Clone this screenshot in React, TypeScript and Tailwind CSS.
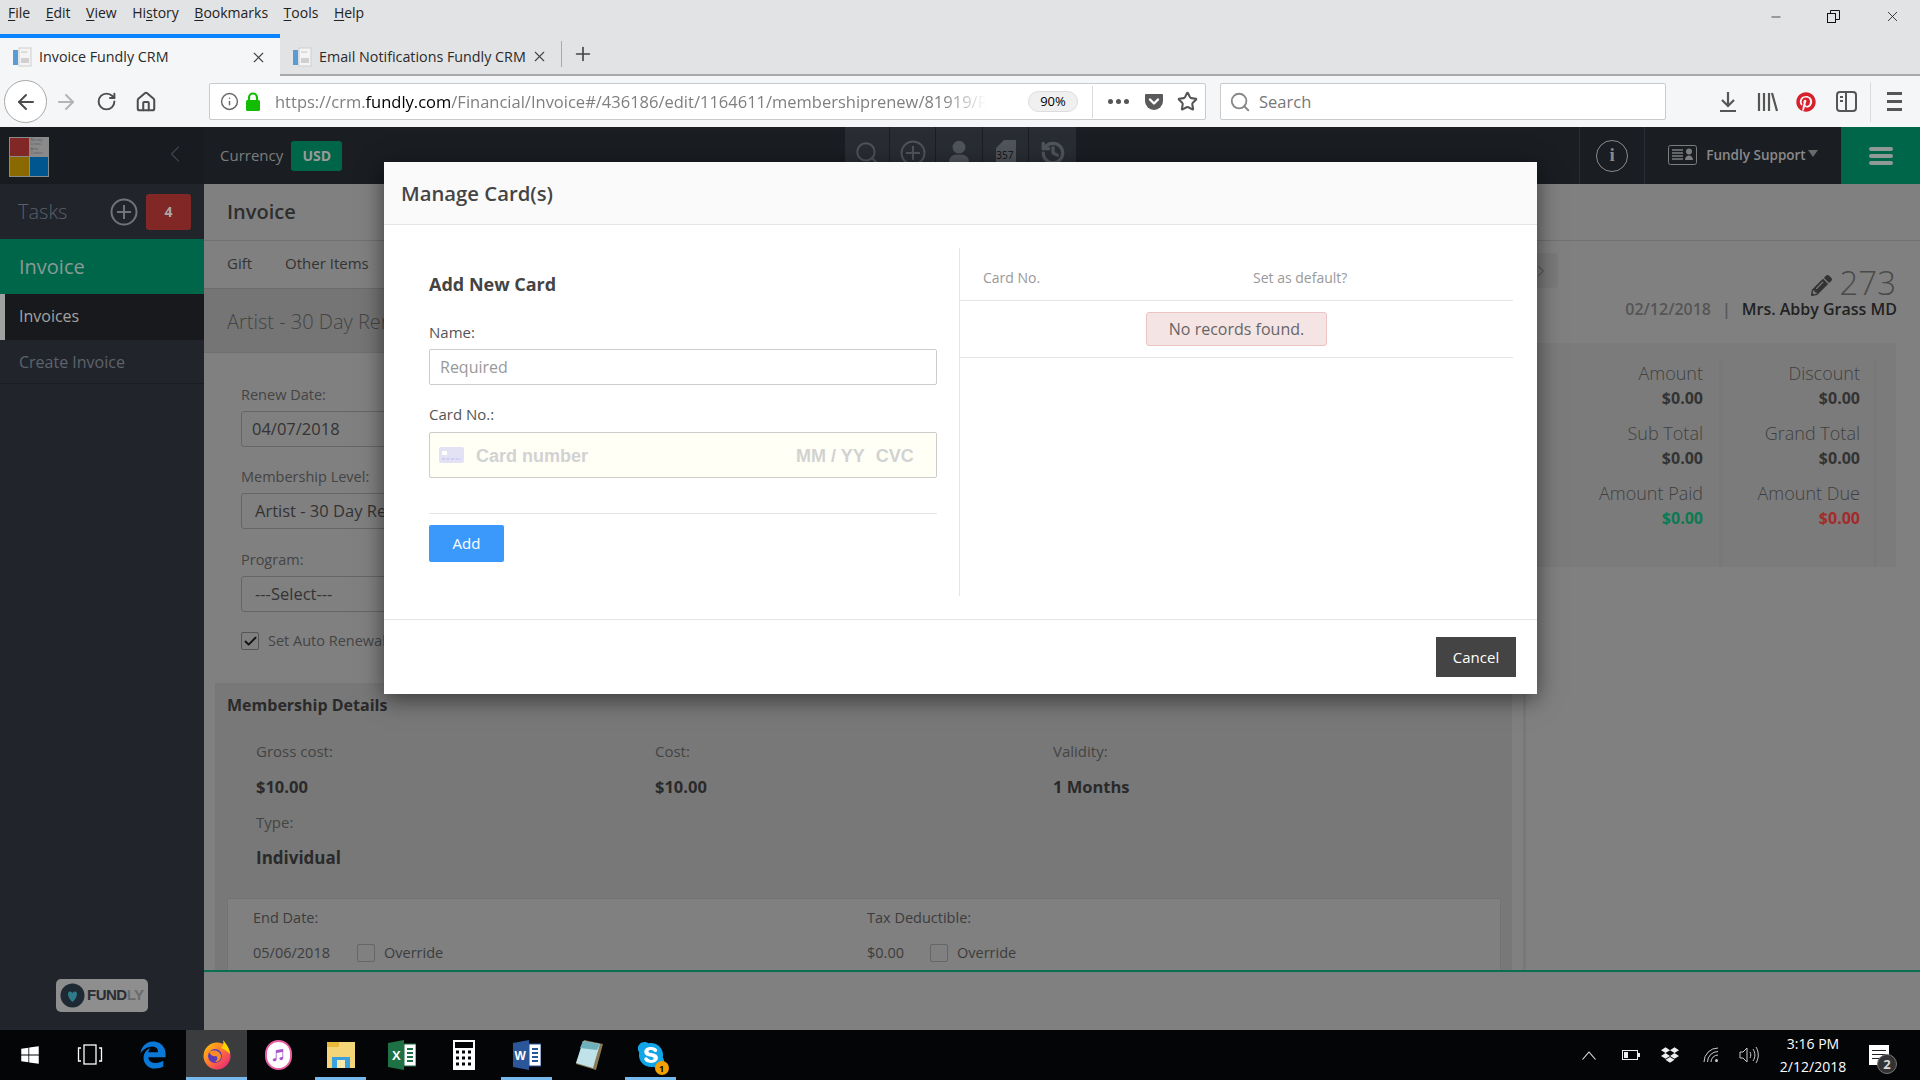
import { ArrowLeft, ArrowRight, Check, Home, Minus, RotateCw, Search, Star, X, Plus, Info, ChevronLeft, ChevronRight, User, History } from "lucide-react";
import { FaDropbox, FaEdgeLegacy, FaItunesNote, FaPencilAlt, FaPinterest, FaSkype, FaWindows } from "react-icons/fa";

const segoe = "font-['Open_Sans',sans-serif]";

function Favicon() {
  return (
    <svg width="20" height="20" viewBox="0 0 20 20" className="shrink-0">
      <rect x="7" y="1" width="12" height="18" fill="#f4f4f4" stroke="#cfcfcf" />
      <rect x="1" y="3" width="5" height="15" fill="#5b9bd5" />
      <rect x="9" y="11" width="8" height="5" fill="#d0d0d0" />
      <rect x="9" y="4" width="6" height="2" fill="#dcdcdc" />
    </svg>
  );
}

function Menu({ first, rest }: { first: string; rest: string }) {
  return (
    <span>
      <span className="underline underline-offset-2">{first}</span>
      {rest}
    </span>
  );
}

function MenuBar() {
  return (
    <div className="flex h-[34px] items-center justify-between bg-[#e2e3e5] pb-[9px] pl-2 pr-[19px] text-[14px] text-[#222]">
      <div className="flex gap-[15.5px]">
        <Menu first="F" rest="ile" />
        <Menu first="E" rest="dit" />
        <Menu first="V" rest="iew" />
        <span>Hi<span className="underline underline-offset-2">s</span>tory</span>
        <Menu first="B" rest="ookmarks" />
        <Menu first="T" rest="ools" />
        <Menu first="H" rest="elp" />
      </div>
      <div className="flex items-center gap-[44px] pt-[8px] text-[#111]">
        <Minus size={14} strokeWidth={1.2} />
        <svg width="13" height="13" viewBox="0 0 13 13" fill="none" stroke="#111">
          <rect x="0.5" y="3.5" width="8" height="9" />
          <path d="M3.5 3.5v-3h9v9h-4" />
        </svg>
        <X size={17} strokeWidth={1.1} />
      </div>
    </div>
  );
}

function TabBar() {
  return (
    <div className="flex h-[42px] items-stretch bg-[#e2e3e5] text-[14.3px] text-[#2a2a2a]">
      <div className="flex w-[280px] items-center border-t-[4px] border-[#0a84ff] bg-[#f5f6f7] pl-3 pr-[13px]">
        <Favicon />
        <span className="ml-[7px] flex-1">Invoice Fundly CRM</span>
        <X size={17} strokeWidth={1.6} className="text-[#444]" />
      </div>
      <div className="flex flex-1 items-center border-b-2 border-[#a8a9ab]">
        <div className="flex w-[282px] items-center border-r border-[#a8a9ab] pl-3 pr-[13px] pt-[5px]">
          <Favicon />
          <span className="ml-[7px] flex-1 whitespace-nowrap">Email Notifications Fundly CRM</span>
          <X size={17} strokeWidth={1.6} className="text-[#444]" />
        </div>
        <Plus size={22} strokeWidth={1.8} className="ml-[10px] text-[#444]" />
      </div>
    </div>
  );
}

function PocketIcon() {
  return (
    <svg width="20" height="20" viewBox="0 0 20 20">
      <path d="M2 2h16a1 1 0 0 1 1 1v6a9 9 0 0 1-18 0V3a1 1 0 0 1 1-1z" fill="#5a5a5c" />
      <path d="M6 7.5l4 4 4-4" fill="none" stroke="#fff" strokeWidth="2.4" strokeLinecap="round" strokeLinejoin="round" />
    </svg>
  );
}

function NavBar() {
  return (
    <div className="flex h-[51px] items-center bg-[#f5f6f7] pl-[4px] text-[#4d4d4f]">
      <div className="flex h-[43px] w-[43px] items-center justify-center rounded-full border border-[#a6a7a9] bg-white">
        <ArrowLeft size={24} strokeWidth={2} />
      </div>
      <ArrowRight size={24} strokeWidth={2} className="ml-[7px] text-[#b4b4b6]" />
      <RotateCw size={21} strokeWidth={2.2} className="ml-[18px]" />
      <Home size={22} strokeWidth={2.2} className="ml-[18px]" />

      <div className="ml-[52px] flex h-[37px] w-[997px] items-center rounded-[2px] border border-[#c9cacb] bg-white">
        <Info size={19} strokeWidth={1.8} className="ml-[10px] text-[#666]" />
        <svg width="16" height="20" viewBox="0 0 16 20" className="ml-[6px]">
          <rect x="1" y="8" width="14" height="11" rx="1.5" fill="#12bc00" />
          <path d="M4 9V5.5a4 4 0 0 1 8 0V9" fill="none" stroke="#12bc00" strokeWidth="2.2" />
        </svg>
        <div className="ml-[14px] w-[711px] overflow-hidden whitespace-nowrap pt-[1px] text-[16.5px] text-[#7f7f7f] [mask-image:linear-gradient(to_right,black_94%,transparent)]">
          https://crm.<span className="text-black">fundly.com</span>/Financial/Invoice#/436186/edit/1164611/membershiprenew/81919/Renew
        </div>
        <div className="ml-[42px] flex h-[21px] w-[50px] items-center justify-center rounded-full border border-[#dcdcdc] bg-[#f0f0f0] text-[13px] text-black">
          90%
        </div>
        <div className="ml-[14px] h-[32px] w-px bg-[#dcdcdc]" />
        <div className="ml-[15px] flex gap-[3px]">
          <span className="h-[5px] w-[5px] rounded-full bg-[#555]" />
          <span className="h-[5px] w-[5px] rounded-full bg-[#555]" />
          <span className="h-[5px] w-[5px] rounded-full bg-[#555]" />
        </div>
        <div className="ml-[15px]"><PocketIcon /></div>
        <Star size={21} strokeWidth={2.4} className="ml-[13px] text-[#555]" />
      </div>

      <div className="ml-[14px] flex h-[37px] w-[446px] items-center rounded-[2px] border border-[#c9cacb] bg-white pt-[1px] text-[16.5px] text-[#777]">
        <Search size={22} strokeWidth={2} className="ml-[8px] text-[#888]" />
        <span className="ml-[8px]">Search</span>
      </div>

      <svg width="20" height="22" viewBox="0 0 20 22" fill="none" stroke="#555" strokeWidth="2.2" className="ml-[52px]">
        <path d="M10 1v13M4 9l6 6 6-6M2 20h16" />
      </svg>
      <svg width="21" height="20" viewBox="0 0 21 20" fill="none" stroke="#555" strokeWidth="2.2" className="ml-[19px]">
        <path d="M2 1v18M7 1v18M12 1v18M15 1l5 18" />
      </svg>
      <FaPinterest size={20} className="ml-[18px] text-[#d6212c]" />
      <svg width="21" height="21" viewBox="0 0 21 21" fill="none" stroke="#555" strokeWidth="2" className="ml-[20px]">
        <rect x="1" y="1" width="19" height="19" rx="3" />
        <path d="M10 1v19M4 6h3M4 10h3" />
      </svg>
      <div className="ml-[13px] h-[40px] w-px bg-[#dcdcdc]" />
      <div className="ml-[16px] flex flex-col gap-[5px]">
        <span className="h-[3px] w-[15px] bg-[#555]" />
        <span className="h-[3px] w-[15px] bg-[#555]" />
        <span className="h-[3px] w-[15px] bg-[#555]" />
      </div>
    </div>
  );
}

function Logo() {
  return (
    <div className="grid h-10 w-10 translate-y-[1px] grid-cols-2 grid-rows-2 gap-px bg-[#8a8a8a] p-px">
      <div className="bg-[#812725]" />
      <div className="overflow-hidden pl-px text-[4px] leading-[4.5px] text-[#555]">Monty Cristo Arts Center</div>
      <div className="bg-[#8a6a00]" />
      <div className="bg-[#00578f]" />
    </div>
  );
}

function TopBar() {
  return (
    <div className={`flex h-[57px] items-stretch bg-[#1a1d22] ${segoe}`}>
      <div className="flex w-[204px] items-center justify-between bg-[#181b20] pl-[9px] pr-[15px]">
        <Logo />
        <ChevronLeft size={28} strokeWidth={1} className="-translate-y-[2px] text-[#3f434a]" />
      </div>
      <div className="ml-4 flex items-center text-[15px] text-[#7d7d7d]">
        Currency
        <div className="ml-2 flex h-[30px] w-[51px] items-center justify-center rounded-[3px] bg-[#00664a] text-[14px] font-bold text-[#9a9a9a]">
          USD
        </div>
      </div>
      <div className="ml-[503px] flex h-[36px] text-[#50545b]">
        <div className="flex w-[45px] justify-center border-r border-[#1a1d22] bg-[#292d33] pt-[13px]"><Search size={26} strokeWidth={1.8} /></div>
        <div className="flex w-[46px] justify-center border-r border-[#1a1d22] bg-[#292d33] pt-[13px]">
          <svg width="26" height="26" viewBox="0 0 26 26" fill="none" stroke="currentColor" strokeWidth="2"><circle cx="13" cy="13" r="11.5" /><path d="M13 6v14M6 13h14" /></svg>
        </div>
        <div className="flex w-[47px] justify-center border-r border-[#1a1d22] bg-[#292d33] pt-[12px]"><User size={28} strokeWidth={3} fill="currentColor" /></div>
        <div className="relative flex w-[46px] justify-center border-r border-[#1a1d22] bg-[#292d33] pt-[13px]">
          <svg width="20" height="26" viewBox="0 0 20 26" fill="currentColor"><path d="M8 0h12v26H0V8z" /></svg>
          <span className="absolute left-[13px] top-[22px] text-[10px] leading-3 text-[#111]">357</span>
        </div>
        <div className="flex w-[47px] justify-center bg-[#292d33] pt-[13px]"><History size={26} strokeWidth={3} /></div>
      </div>
      <div className="ml-[503px] flex w-[66px] items-center justify-center border-x border-[#2a2d33]">
        <div className="flex h-8 w-8 items-center justify-center rounded-full border border-[#8a8a8a] font-['Liberation_Serif',serif] text-[19px] font-bold text-[#8a8a8a]">i</div>
      </div>
      <div className="flex flex-1 items-center pb-[1px] pl-[23px] text-[13.5px] font-semibold text-[#8a8a8a]">
        <svg width="29" height="20" viewBox="0 0 29 20" fill="none" className="shrink-0">
          <rect x="0.5" y="0.5" width="28" height="19" rx="2" stroke="#7d7d7d" />
          <path d="M4 5h11M4 8h11M4 11h11M4 14h11" stroke="#7d7d7d" strokeWidth="1.4" />
          <circle cx="21" cy="6.5" r="3" fill="#7d7d7d" />
          <path d="M17 15c0-6 8-6 8 0z" fill="#7d7d7d" />
        </svg>
        <span className="ml-[9px] whitespace-nowrap">Fundly Support</span>
        <span className="ml-[2px] h-0 w-0 -translate-y-[2px] border-x-[5px] border-t-[7px] border-x-transparent border-t-[#6a6a6a]" />
      </div>
      <div className="flex w-[79px] flex-col items-center justify-center gap-[3px] bg-[#00664a]">
        <span className="h-1 w-6 rounded-full bg-[#8f9a96]" />
        <span className="h-1 w-6 rounded-full bg-[#8f9a96]" />
        <span className="h-1 w-6 rounded-full bg-[#8f9a96]" />
      </div>
    </div>
  );
}

function Sidebar() {
  return (
    <div className={`flex w-[204px] flex-col bg-[#21252b] ${segoe}`}>
      <div className="flex h-[55px] items-center pl-[18px] text-[20px] font-light text-[#5a5f68]">
        <span className="flex-1">Tasks</span>
        <svg width="28" height="28" viewBox="0 0 28 28" fill="none" stroke="#71747a" strokeWidth="2" className="mr-[8px]">
          <circle cx="14" cy="14" r="12.5" />
          <path d="M14 7v14M7 14h14" />
        </svg>
        <div className="mr-[13px] flex h-9 w-[45px] items-center justify-center rounded-[3px] bg-[#812725] text-[14px] font-bold text-[#a8a8a8]">4</div>
      </div>
      <div className="flex h-[55px] items-center bg-[#00664a] pl-[19px] text-[20px] text-[#8a9a94]">Invoice</div>
      <div className="flex h-[46px] items-center border-l-[5px] border-[#a0a0a0] bg-[#17191d] pb-[2px] pl-[14px] text-[16px] text-[#a3a3a3]">Invoices</div>
      <div className="flex h-[44px] items-center border-b border-[#1a1d22] pl-[19px] text-[16px] text-[#5e636b]">Create Invoice</div>
      <div className="mt-auto mb-[18px] ml-[56px] flex h-[33px] w-[92px] items-center rounded-[5px] bg-[#8e8e8e] pl-[4px] font-['Liberation_Sans',sans-serif] text-[15px] font-bold tracking-[-0.5px] text-[#2a2d33]">
        <svg width="25" height="25" viewBox="0 0 25 25" className="mr-[2px] shrink-0">
          <circle cx="12.5" cy="12.5" r="12" fill="#1f2933" />
          <path d="M12.5 19C7.500 15 7 9 9.500 8.500c1.500-.3 2.500.7 3 1.500.5-.8 1.500-1.800 3-1.500C18 9 17.500 15 12.500 19z" fill="#2f7a88" />
        </svg>
        FUND<span className="text-[#6a6a6a]">LY</span>
      </div>
    </div>
  );
}

function Field({ label, value, pad }: { label: string; value: string; pad: string }) {
  return (
    <>
      <div className="text-[14.5px] leading-5 text-[#444]">{label}</div>
      <div className={`mt-[6px] flex h-[36px] w-[500px] items-center rounded-[3px] border border-[#666] text-[16.5px] text-[#333] ${pad}`}>{value}</div>
    </>
  );
}

function Stat({ label, value, color }: { label: string; value: string; color: string }) {
  return (
    <div className="mb-[12px] text-right">
      <div className="whitespace-nowrap text-[18px] font-light leading-6 text-[#3f3f3f]">{label}</div>
      <div className={`mt-[2px] text-[16px] font-bold leading-[22px] ${color}`}>{value}</div>
    </div>
  );
}

function PageBody() {
  return (
    <div className={`flex flex-1 flex-col bg-[#808080] ${segoe}`}>
      <div className="flex h-[57px] shrink-0 items-center border-b border-[#707070] pl-[23px] text-[20px] font-semibold text-[#2e2e2e]">Invoice</div>

      <div className="flex min-h-0 flex-1">
        <div className="flex w-[1319px] shrink-0 flex-col overflow-hidden">
          <div className="flex h-[48px] shrink-0 items-center gap-[33px] border-b border-[#6c6c6c] pb-[2px] pl-[23px] text-[15px] text-[#333]">
            <span>Gift</span>
            <span>Other Items</span>
          </div>
          <div className="flex h-[64px] shrink-0 items-center border-b border-[#6f6f6f] bg-[#757575] pl-[23px] pt-[2px] text-[20px] font-light text-[#444]">
            Artist - 30 Day Renewal
          </div>

          <div className="pl-[37px] pt-[32px]">
            <Field label="Renew Date:" value="04/07/2018" pad="pl-[10px]" />
            <div className="mt-[20px]">
              <Field label="Membership Level:" value="Artist - 30 Day Renewal" pad="pl-[13px]" />
            </div>
            <div className="mt-[21px]">
              <Field label="Program:" value="---Select---" pad="pl-[13px]" />
            </div>
            <div className="mt-[20px] flex items-center text-[14.5px] leading-[18px] text-[#444]">
              <span className="flex h-[18px] w-[18px] items-center justify-center rounded-[2px] border border-[#555]">
                <Check size={15} strokeWidth={3} className="text-[#111]" />
              </span>
              <span className="ml-[9px]">Set Auto Renewal</span>
            </div>
          </div>

          <div className="ml-[11px] mt-[33px] w-[1297px] shrink-0 bg-[#787878] pb-8 pt-[11px]">
            <div className="pl-[12px] text-[16px] font-bold leading-[22px] text-[#2a2a2a]">Membership Details</div>
            <div className="mt-[25px] grid grid-cols-[399px_398px_1fr] gap-y-[14px] pl-[41px]">
              <div className="text-[15px] leading-[21px] text-[#444]">Gross cost:</div>
              <div className="text-[15px] leading-[21px] text-[#444]">Cost:</div>
              <div className="text-[15px] leading-[21px] text-[#444]">Validity:</div>
              <div className="text-[16.5px] font-bold leading-[22px] text-[#2a2a2a]">$10.00</div>
              <div className="text-[16.5px] font-bold leading-[22px] text-[#2a2a2a]">$10.00</div>
              <div className="text-[16.5px] font-bold leading-[22px] text-[#2a2a2a]">1 Months</div>
              <div className="col-span-3 text-[15px] leading-5 text-[#444]">Type:</div>
              <div className="col-span-3 mt-[1px] text-[17px] font-bold leading-[22px] text-[#2a2a2a]">Individual</div>
            </div>
            <div className="ml-[12px] mt-[29px] grid w-[1274px] grid-cols-[614px_1fr] gap-y-[15px] border border-[#737373] bg-[#808080] pb-6 pl-[25px] pt-[9px] text-[14.5px] leading-5 text-[#3c3c3c]">
              <div>End Date:</div>
              <div>Tax Deductible:</div>
              <div className="flex items-center">
                05/06/2018
                <span className="ml-[27px] h-[18px] w-[18px] rounded-[2px] border border-[#666]" />
                <span className="ml-[9px]">Override</span>
              </div>
              <div className="flex items-center">
                $0.00
                <span className="ml-[26px] h-[18px] w-[18px] rounded-[2px] border border-[#666]" />
                <span className="ml-[9px]">Override</span>
              </div>
            </div>
          </div>
        </div>

        <div className="relative flex flex-1 flex-col border-l-[3px] border-[#787878] pr-[24px]">
          <div className="absolute left-0 top-[12px] flex h-[35px] w-[32px] items-center justify-end rounded-r-[4px] bg-[#7a7a7a] pr-[8px] text-[#5a5a5a]">
            <ChevronRight size={18} strokeWidth={1.5} />
          </div>
          <div className="flex items-center justify-end pt-[26px] text-[33px] font-light leading-8 text-[#4a4a4a]">
            <FaPencilAlt size={21} className="mr-[7px] translate-y-[2px] text-[#333]" />
            273
          </div>
          <div className="-mr-[1px] flex justify-end text-[16px] font-semibold leading-5">
            <span className="text-[#555]">02/12/2018</span>
            <span className="mx-[11px] text-[#555]">|</span>
            <span className="text-[#222]">Mrs. Abby Grass MD</span>
          </div>
          <div className="mt-[24px] flex h-[224px] justify-end bg-[#7b7b7b] pr-[19px] pt-[18px]">
            <div className="w-[170px] border-r-[3px] border-[#787878] pr-[16px]">
              <Stat label="Amount" value="$0.00" color="text-[#333]" />
              <Stat label="Sub Total" value="$0.00" color="text-[#333]" />
              <Stat label="Amount Paid" value="$0.00" color="text-[#0b7a52]" />
            </div>
            <div className="w-[155px] border-r-[3px] border-[#787878] pr-[14px]">
              <Stat label="Discount" value="$0.00" color="text-[#333]" />
              <Stat label="Grand Total" value="$0.00" color="text-[#333]" />
              <Stat label="Amount Due" value="$0.00" color="text-[#a52a2a]" />
            </div>
          </div>
        </div>
      </div>

      <div className="h-[60px] shrink-0 border-t-2 border-[#0a6e50] bg-[#808080]" />
    </div>
  );
}

function CardModal() {
  return (
    <div className={`absolute left-[384px] top-[35px] flex h-[532px] w-[1153px] flex-col bg-white shadow-[0_5px_22px_rgba(0,0,0,0.55)] ${segoe}`}>
      <div className="flex h-[63px] shrink-0 items-center border-b border-[#e5e5e5] bg-[#fafafa] pl-[17px] pt-[1px] text-[20.3px] font-semibold text-[#444]">
        Manage Card(s)
      </div>

      <div className="flex h-[394px] shrink-0 pb-[23px] pt-[23px]">
        <div className="w-[576px] border-r border-[#e5e5e5] pl-[45px] pr-[22px]">
          <div className="pt-[24px] text-[18px] font-bold leading-6 text-[#444]">Add New Card</div>
          <div className="mt-[26px] text-[15px] leading-5 text-[#555]">Name:</div>
          <div className="mt-[7px] flex h-[36px] items-center rounded-[2px] border border-[#ccc] pl-[10px] text-[16px] text-[#999]">Required</div>
          <div className="mt-[19px] text-[15px] leading-5 text-[#555]">Card No.:</div>
          <div className="mt-[8px] flex h-[46px] items-center rounded-[2px] border border-[#ccc] bg-[#fffff6] pl-[9px] pt-[3px] font-['Liberation_Sans',sans-serif] text-[18px] font-bold text-[#d2d2d2]">
            <svg width="25" height="22" viewBox="0 0 25 22" className="-translate-y-[2px]">
              <rect x="0" y="3" width="25" height="16" rx="2" fill="#e2e2f4" />
              <rect x="3" y="7" width="5" height="4" fill="#fff" />
              <path d="M3 15h19" stroke="#c8c8ee" strokeWidth="1.500" strokeDasharray="3 1.500" />
            </svg>
            <span className="ml-[12px] w-[320px]">Card number</span>
            <span className="whitespace-nowrap">MM / YY</span>
            <span className="ml-[11px]">CVC</span>
          </div>
          <div className="mt-[35px] border-t border-[#e5e5e5]" />
          <button className="mt-[11px] h-[37px] w-[75px] rounded-[2px] bg-[#3b99fc] text-[15px] text-white">Add</button>
        </div>

        <div className="mr-[24px] flex-1">
          <div className="grid h-[53px] grid-cols-[270px_1fr] border-b border-[#e5e5e5] pl-[23px] pt-[20px] text-[14px] leading-5 text-[#999]">
            <span>Card No.</span>
            <span>Set as default?</span>
          </div>
          <div className="flex h-[57px] items-center justify-center border-b border-[#e5e5e5]">
            <div className="flex h-[34px] w-[181px] items-center justify-center rounded-[3px] border border-[#ecc4c4] bg-[#f5e4e4] text-[16px] text-[#666]">
              No records found.
            </div>
          </div>
        </div>
      </div>

      <div className="flex flex-1 items-start justify-end border-t border-[#e5e5e5] pr-[21px] pt-[17px]">
        <button className="h-[40px] w-[80px] bg-[#444] text-[15px] text-white">Cancel</button>
      </div>
    </div>
  );
}

function AppArea() {
  return (
    <div className="relative flex h-[903px] flex-col overflow-hidden">
      <TopBar />
      <div className="flex min-h-0 flex-1">
        <Sidebar />
        <PageBody />
      </div>
      <CardModal />
    </div>
  );
}

function Firefox() {
  return (
    <svg width="28" height="30" viewBox="0 0 28 30">
      <defs>
        <linearGradient id="ff" x1="0" y1="0" x2="1" y2="1">
          <stop offset="0" stopColor="#ffcb00" />
          <stop offset="0.5" stopColor="#ff7139" />
          <stop offset="1" stopColor="#e31587" />
        </linearGradient>
      </defs>
      <circle cx="14" cy="16" r="13.500" fill="url(#ff)" />
      <path d="M20 0c4 5 7 9 7 14-3-3-6-5-9-6 2-2 3-5 2-8z" fill="#ffd400" />
      <circle cx="12" cy="16" r="7" fill="#5b3bb5" />
      <path d="M6 12c5-3 11-1 12 4 0 4-3 6-6 6 3-2 3-5 1-6-2 1-5 0-7-4z" fill="#ff8a2a" />
    </svg>
  );
}

function TaskItem({ active, running, width, children }: { active?: boolean; running?: boolean; width: string; children: React.ReactNode }) {
  return (
    <div className={`relative flex h-full items-center justify-center ${width} ${active ? "bg-[#3a3c3e]" : ""}`}>
      {children}
      {running ? <span className="absolute inset-x-0 bottom-0 h-[3px] bg-[#76b9ed]" /> : null}
    </div>
  );
}

function Taskbar() {
  return (
    <div className="flex h-[50px] items-center bg-[#030507] font-['Open_Sans',sans-serif] text-white">
      <TaskItem width="w-[60px]"><FaWindows size={20} /></TaskItem>
      <TaskItem width="w-[60px]">
        <svg width="26" height="26" viewBox="0 0 26 26" fill="none" stroke="#fff" strokeWidth="1.300">
          <rect x="7" y="3" width="12" height="19" />
          <path d="M4 6H1.500v13H4M22 6h2.500v13H22" />
        </svg>
      </TaskItem>
      <TaskItem width="w-[66px]"><FaEdgeLegacy size={28} className="text-[#0a78d7]" /></TaskItem>
      <TaskItem active running width="w-[61px]"><Firefox /></TaskItem>
      <TaskItem width="w-[62px]">
        <div className="flex h-[30px] w-[27px] items-center justify-center rounded-full border-2 border-[#e85d9e] bg-white">
          <FaItunesNote size={14} className="text-[#a855c8]" />
        </div>
      </TaskItem>
      <TaskItem running width="ml-[6px] w-[51px]">
        <svg width="28" height="30" viewBox="0 0 28 30">
          <rect x="0" y="2" width="28" height="26" fill="#f4d679" />
          <rect x="0" y="2" width="12" height="5" fill="#e8b93a" />
          <rect x="5" y="17" width="18" height="11" fill="#3aa0e0" />
          <rect x="10" y="20" width="8" height="8" fill="#f7e7a8" />
        </svg>
      </TaskItem>
      <TaskItem width="w-[72px]">
        <svg width="28" height="30" viewBox="0 0 28 30">
          <path d="M0 3l16-3v30L0 27z" fill="#1e7145" />
          <rect x="16" y="4" width="12" height="22" fill="#fff" stroke="#1e7145" />
          <path d="M19 9h6M19 13h6M19 17h6M19 21h6" stroke="#1e7145" strokeWidth="2" />
          <text x="4" y="20" fill="#fff" fontSize="13" fontFamily="Liberation Sans" fontWeight="700">X</text>
        </svg>
      </TaskItem>
      <TaskItem width="w-[52px]">
        <svg width="22" height="30" viewBox="0 0 22 30">
          <rect width="22" height="30" fill="#fff" />
          <rect x="2" y="2" width="18" height="6" fill="#030507" />
          <path d="M3 12h3M9 12h3M15 12h3M3 18h3M9 18h3M15 18h3M3 24h3M9 24h3M15 24h3" stroke="#030507" strokeWidth="3" />
        </svg>
      </TaskItem>
      <TaskItem running width="ml-[11px] w-[51px]">
        <svg width="28" height="30" viewBox="0 0 28 30">
          <path d="M0 3l16-3v30L0 27z" fill="#2b579a" />
          <rect x="16" y="4" width="12" height="22" fill="#fff" stroke="#2b579a" />
          <path d="M19 9h6M19 13h6M19 17h6M19 21h6" stroke="#2b579a" strokeWidth="2" />
          <text x="1.500" y="20" fill="#fff" fontSize="12" fontFamily="Liberation Sans" fontWeight="700">W</text>
        </svg>
      </TaskItem>
      <TaskItem width="w-[73px]">
        <svg width="28" height="30" viewBox="0 0 28 30">
          <path d="M9 0l19 4-7 26L1 24z" fill="#8a7a55" />
          <path d="M8 1l17 3-7 24L1 23z" fill="#bfe3e8" />
          <path d="M8 1l17 3-3 6L5 8z" fill="#6fb0bd" />
        </svg>
      </TaskItem>
      <TaskItem running width="w-[51px]">
        <div className="relative">
          <span className="absolute inset-[6px] rounded-full bg-white" />
          <FaSkype size={30} className="relative text-[#12a5e8]" />
          <span className="absolute -bottom-[5px] -right-[3px] flex h-[14px] w-[14px] items-center justify-center rounded-full bg-[#f5a000] text-[9px] font-bold leading-none text-black">1</span>
        </div>
      </TaskItem>

      <div className="ml-auto flex h-full items-center text-[#d8d8d8]">
        <svg width="14" height="9" viewBox="0 0 14 9" fill="none" stroke="#e8e8e8" strokeWidth="1.100"><path d="M0.500 8.500L7 1l6.500 7.500" /></svg>
        <svg width="18" height="10" viewBox="0 0 18 10" fill="none" className="ml-[26px]">
          <rect x="0.500" y="0.500" width="15" height="9" stroke="#eee" />
          <rect x="2" y="2" width="4" height="6" fill="#eee" />
          <rect x="16" y="3" width="2" height="4" fill="#eee" />
        </svg>
        <FaDropbox size={18} className="ml-[21px] text-[#eee]" />
        <svg width="16" height="16" viewBox="0 0 16 16" fill="none" stroke="#ccc" strokeWidth="1" className="ml-[24px]">
          <path d="M1 15A14 14 0 0 1 15 1M4.500 15A10.500 10.500 0 0 1 15 4.500M8 15A7 7 0 0 1 15 8" />
          <circle cx="13.500" cy="13.500" r="1.500" fill="#ccc" stroke="none" />
        </svg>
        <svg width="20" height="18" viewBox="0 0 20 18" fill="none" stroke="#ccc" strokeWidth="1" className="ml-[20px]">
          <path d="M1 6h3l4-4v14l-4-4H1zM11 6c1 2 1 4 0 6M14 3c2.500 4 2.500 8 0 12M17 1c3 5 3 11 0 16" />
        </svg>
        <div className="ml-[18px] flex w-[72px] flex-col items-center text-[14px] leading-[23px] text-white">
          <span>3:16 PM</span>
          <span>2/12/2018</span>
        </div>
        <div className="relative ml-[20px] mr-[31px] h-[20px] w-[20px] bg-white">
          <div className="mx-[3px] mt-[5px] flex flex-col gap-[3px]">
            <span className="h-px bg-[#222]" />
            <span className="h-px bg-[#222]" />
            <span className="h-px bg-[#222]" />
          </div>
          <span className="absolute -bottom-[9px] -right-[8px] flex h-[20px] w-[20px] items-center justify-center rounded-full border border-[#777] bg-[#333] text-[13px] font-bold leading-none">2</span>
        </div>
      </div>
    </div>
  );
}

export default function App() {
  return (
    <div className={`flex h-[1080px] w-[1920px] flex-col overflow-hidden ${segoe}`}>
      <MenuBar />
      <TabBar />
      <NavBar />
      <AppArea />
      <Taskbar />
    </div>
  );
}
